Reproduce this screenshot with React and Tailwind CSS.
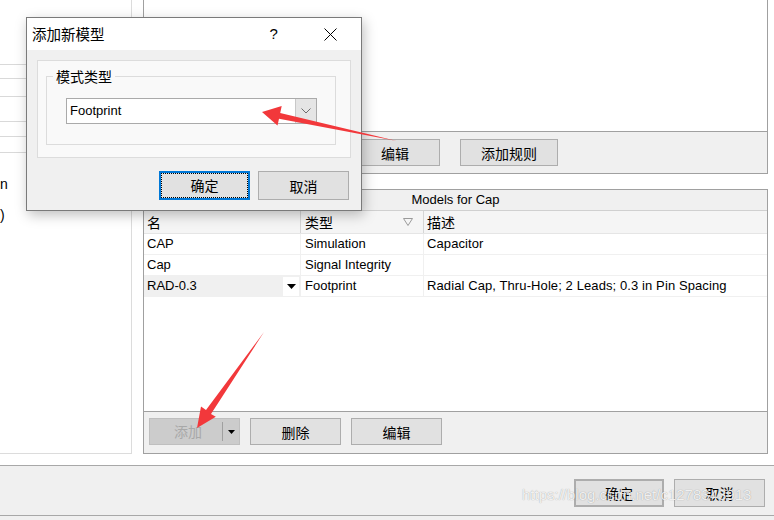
import React from "react";

const cjk = { fontFamily: '"Noto Sans CJK SC", "Microsoft YaHei", sans-serif' };
const lat = { fontFamily: '"Liberation Sans", "Noto Sans CJK SC", Arial, sans-serif' };

function Btn({ children, className = "" }) {
  return (
    <div
      className={
        "flex items-center justify-center border border-[#adadad] bg-[#e1e1e1] text-[14px] text-black leading-none " +
        className
      }
      style={cjk}
    >
      {children}
    </div>
  );
}

function Row({ name, type, desc, sel }) {
  return (
    <div className="flex h-[21px] border-b border-[#f0f0f0] text-[13px] text-black" style={lat}>
      <div className={"flex w-[156px] items-center justify-between pl-[3px] " + (sel ? "bg-[#f0f0f0]" : "")}>
        <span>{name}</span>
        {sel && (
          <div className="mr-[1px] flex h-[19px] w-[16px] items-center justify-center bg-white">
            <svg width="9" height="5" viewBox="0 0 9 5"><path d="M0 0h9L4.5 5z" fill="#000" /></svg>
          </div>
        )}
      </div>
      <div className="flex w-[123px] items-center border-l border-[#f0f0f0] pl-[4px]">{type}</div>
      <div className="flex flex-1 items-center border-l border-[#f0f0f0] pl-[3px] tracking-[0.1px]">{desc}</div>
    </div>
  );
}

export default function App() {
  return (
    <div className="relative h-[520px] w-[774px] overflow-hidden bg-white">
      <div className="flex h-[465px]">
        {/* left panel */}
        <div className="flex h-[454px] w-[132px] flex-col border-r border-b border-[#dcdcdc] bg-white">
          <div className="h-[65px] border-b border-[#d9d9d9]" />
          <div className="h-[14px] border-b border-[#d9d9d9]" />
          <div className="h-[18px] border-b border-[#d9d9d9]" />
          <div className="h-[25px] border-b border-[#d9d9d9]" />
          <div className="h-[15px] border-b border-[#d9d9d9]" />
          <div className="h-[16px] border-b border-[#d9d9d9]" />
          <div className="mt-[24px] text-[14px] leading-none text-black" style={lat}>n</div>
          <div className="mt-[17px] text-[14px] leading-none text-black" style={lat}>)</div>
        </div>
        <div className="w-[11px]" />
        {/* right column */}
        <div className="flex w-[625px] flex-col">
          <div className="flex h-[174px] flex-col border-x border-b border-[#a0a0a0]">
            <div className="h-[132px] border-b border-[#a0a0a0] bg-white" />
            <div className="flex flex-1 items-start gap-[10px] bg-[#f0f0f0] pl-[5px] pt-[7px]">
              <Btn className="h-[27px] w-[91px]">添加</Btn>
              <Btn className="h-[27px] w-[90px]">删除</Btn>
              <Btn className="h-[27px] w-[90px]">编辑</Btn>
              <Btn className="ml-[10px] h-[27px] w-[98px]">添加规则</Btn>
            </div>
          </div>
          <div className="h-[15px]" />
          <div className="flex h-[265px] flex-col border border-[#a0a0a0]">
            <div className="flex h-[21px] items-center justify-center border-b border-[#d0d0d0] bg-[#f0f0f0] text-[13px] text-black" style={lat}>
              Models for Cap
            </div>
            <div className="flex h-[23px] border-b border-[#e5e5e5] bg-[#f5f5f5] text-[14px] text-black" style={cjk}>
              <div className="flex w-[156px] items-center pl-[3px]">名</div>
              <div className="flex w-[123px] items-center justify-between border-l border-[#d5d5d5] pl-[4px] pr-[10px]">
                <span>类型</span>
                <svg width="10" height="8" viewBox="0 0 10 8"><path d="M0.5 0.5h9L5 7.5z" fill="none" stroke="#9a9a9a" /></svg>
              </div>
              <div className="flex flex-1 items-center border-l border-[#d5d5d5] pl-[3px]">描述</div>
            </div>
            <Row name="CAP" type="Simulation" desc="Capacitor" />
            <Row name="Cap" type="Signal Integrity" desc="" />
            <Row name="RAD-0.3" type="Footprint" desc="Radial Cap, Thru-Hole; 2 Leads; 0.3 in Pin Spacing" sel />
            <div className="flex-1 bg-white" />
            <div className="flex h-[42px] items-start gap-[10px] border-t border-[#a0a0a0] bg-[#f0f0f0] pl-[5px] pt-[6px]">
              <div className="flex h-[27px] w-[91px] items-center border border-[#bfbfbf] bg-[#cccccc]">
                <div className="flex flex-1 items-center justify-center pl-[4px] text-[14px] text-[#a8a8a8]" style={cjk}>添加</div>
                <div className="h-[19px] w-px bg-[#a0a0a0]" />
                <div className="flex w-[16px] items-center justify-center">
                  <svg width="7" height="4" viewBox="0 0 7 4"><path d="M0 0h7L3.5 4z" fill="#000" /></svg>
                </div>
              </div>
              <Btn className="h-[27px] w-[91px]">删除</Btn>
              <Btn className="h-[27px] w-[91px]">编辑</Btn>
            </div>
          </div>
        </div>
      </div>

      {/* bottom bar */}
      <div className="flex h-[51px] items-start justify-end gap-[10px] border-t border-b border-[#a8a8a8] bg-[#f0f0f0] pr-[9px] pt-[13px]">
        <Btn className="h-[28px] w-[90px] border-2 border-[#0078d7]">确定</Btn>
        <Btn className="h-[28px] w-[91px]">取消</Btn>
      </div>
      <div className="h-[4px] bg-[#f0f0f0]" />

      {/* watermark */}
      <div
        className="pointer-events-none absolute left-[522px] top-[487px] text-[15px] leading-none text-white/85 [text-shadow:0_0_1px_rgba(0,0,0,0.4)]"
        style={lat}
      >
        https://blog.csdn.net/c1278343913
      </div>

      {/* dialog */}
      <div className="absolute left-[26px] top-[17px] flex h-[194px] w-[336px] flex-col border border-[#7a7a7a] bg-[#f0f0f0] shadow-[2px_4px_12px_rgba(0,0,0,0.25)]">
        <div className="flex h-[32px] items-center bg-white pl-[5px]">
          <span className="text-[14.5px] text-black" style={cjk}>添加新模型</span>
          <span className="ml-[165px] text-[15px] text-black" style={lat}>?</span>
          <svg className="ml-[46px]" width="13" height="13" viewBox="0 0 13 13">
            <path d="M0.5 0.5L12.5 12.5M12.5 0.5L0.5 12.5" stroke="#000" strokeWidth="1" />
          </svg>
        </div>
        <div className="mx-[10px] mt-[10px] h-[98px] border border-[#dcdcdc] bg-[#f9f9f9] px-[8px] pt-[15px]">
          <div className="relative h-[69px] w-[290px] border border-[#dcdcdc]">
            <div className="absolute -top-[10px] left-[6px] bg-[#f9f9f9] px-[3px] text-[14px] leading-[18px] text-black" style={cjk}>
              模式类型
            </div>
            <div className="ml-[19px] mt-[21px] flex h-[26px] w-[251px] border border-[#aaaaaa] bg-white">
              <div className="flex flex-1 items-center pl-[3px] text-[13px] text-black" style={lat}>Footprint</div>
              <div className="flex w-[21px] items-center justify-center border-l border-[#c8c8c8] bg-[#e5e5e5]">
                <svg width="10" height="6" viewBox="0 0 10 6"><path d="M0.5 0.5L5 5L9.5 0.5" fill="none" stroke="#6d6d6d" /></svg>
              </div>
            </div>
          </div>
        </div>
        <div className="mt-[13px] flex justify-end gap-[8px] pr-[12px]">
          <div className="flex h-[29px] w-[91px] items-center justify-center border-2 border-[#0078d7] bg-[#e1e1e1]">
            <div className="flex h-full w-full items-center justify-center border border-dotted border-black text-[14px] text-black" style={cjk}>
              确定
            </div>
          </div>
          <Btn className="h-[29px] w-[91px]">取消</Btn>
        </div>
      </div>

      {/* red arrows */}
      <svg className="pointer-events-none absolute left-0 top-0" width="774" height="520" viewBox="0 0 774 520">
        <polygon points="262,112 281.7,106 280.2,112.9 397,141 279,118.7 277.5,125.6" fill="#f2383b" />
        <polygon points="197,428 201,406.5 206,410 264,332 211,414 215.8,416.7" fill="#f2383b" />
      </svg>
    </div>
  );
}
